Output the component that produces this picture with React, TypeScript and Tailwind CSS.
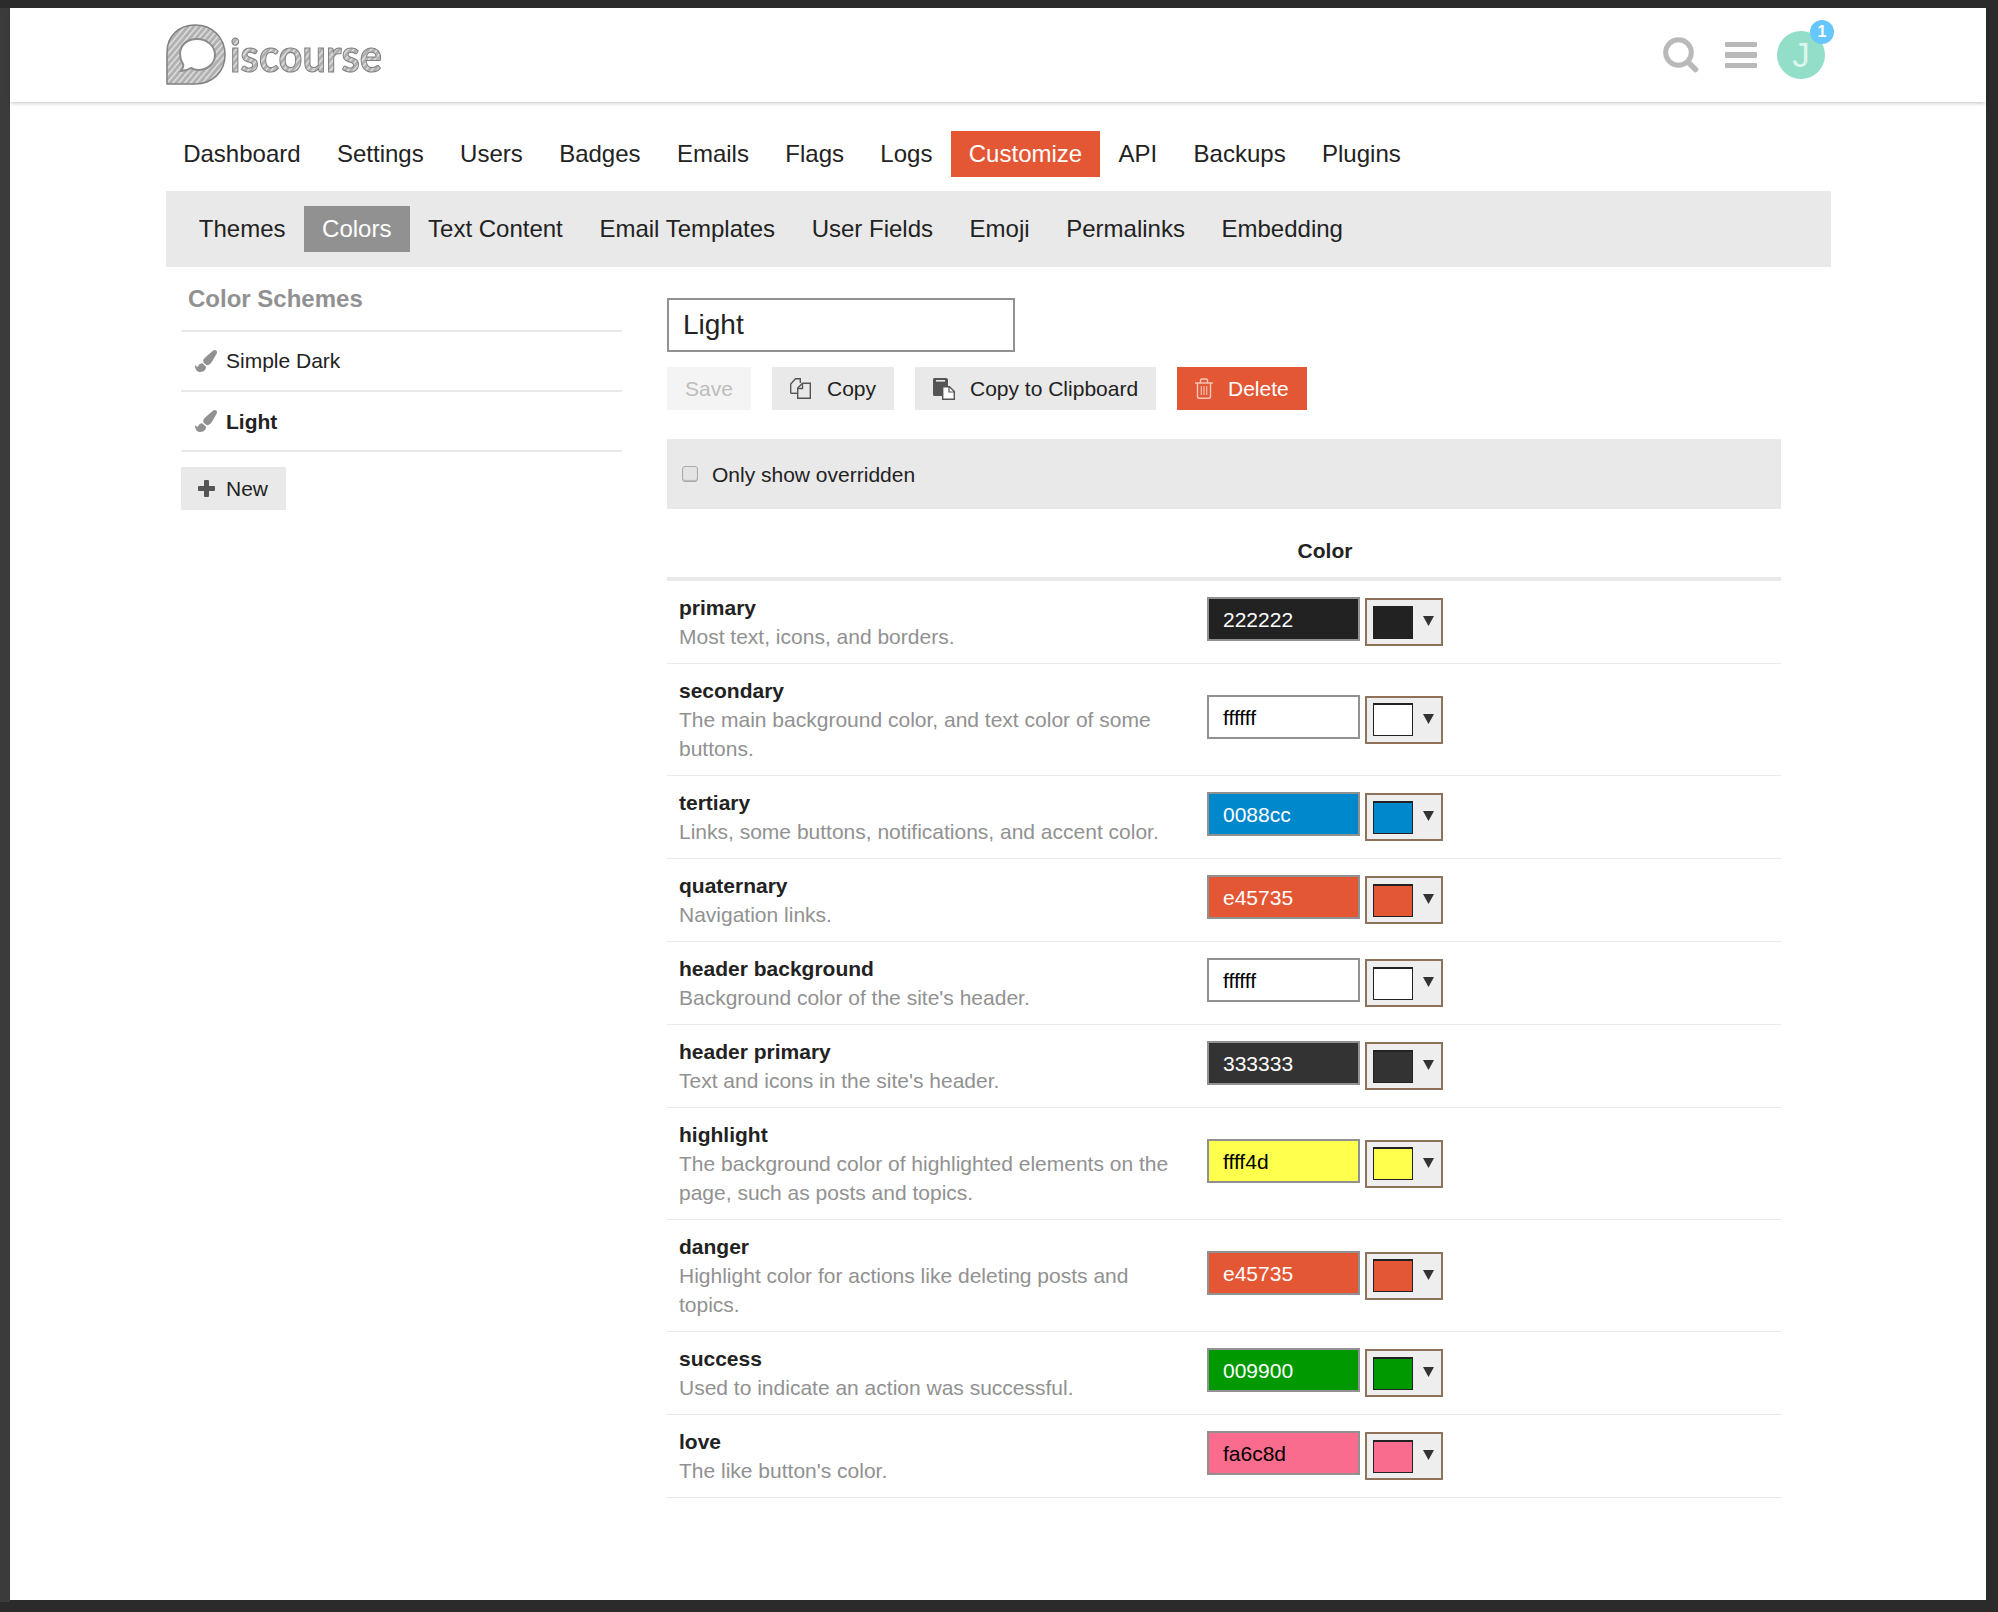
import React from "react";
import { FaPaintBrush } from "react-icons/fa";

const mainNav = ["Dashboard", "Settings", "Users", "Badges", "Emails", "Flags", "Logs", "Customize", "API", "Backups", "Plugins"];
const subNav = ["Themes", "Colors", "Text Content", "Email Templates", "User Fields", "Emoji", "Permalinks", "Embedding"];

interface IColor {
  name: string;
  description: string;
  value: string;
  fill: string;
  text: string;
}

const colors: IColor[] = [
  { name: "primary", description: "Most text, icons, and borders.", value: "222222", fill: "bg-[#222222]", text: "text-white" },
  { name: "secondary", description: "The main background color, and text color of some buttons.", value: "ffffff", fill: "bg-white", text: "text-black" },
  { name: "tertiary", description: "Links, some buttons, notifications, and accent color.", value: "0088cc", fill: "bg-[#0088cc]", text: "text-white" },
  { name: "quaternary", description: "Navigation links.", value: "e45735", fill: "bg-[#e45735]", text: "text-white" },
  { name: "header background", description: "Background color of the site's header.", value: "ffffff", fill: "bg-white", text: "text-black" },
  { name: "header primary", description: "Text and icons in the site's header.", value: "333333", fill: "bg-[#333333]", text: "text-white" },
  { name: "highlight", description: "The background color of highlighted elements on the page, such as posts and topics.", value: "ffff4d", fill: "bg-[#ffff4d]", text: "text-black" },
  { name: "danger", description: "Highlight color for actions like deleting posts and topics.", value: "e45735", fill: "bg-[#e45735]", text: "text-white" },
  { name: "success", description: "Used to indicate an action was successful.", value: "009900", fill: "bg-[#009900]", text: "text-white" },
  { name: "love", description: "The like button's color.", value: "fa6c8d", fill: "bg-[#fa6c8d]", text: "text-black" },
];

const Logo = () => (
  <svg width="280" height="70" viewBox="0 0 280 70" className="block">
    <defs>
      <pattern id="hatch" width="4.500" height="4.500" patternUnits="userSpaceOnUse" patternTransform="rotate(-50)">
        <rect width="4.500" height="4.500" fill="#b0b0b0" />
        <rect width="4.500" height="1.500" fill="#e0e0e0" />
      </pattern>
      <filter id="soft">
        <feGaussianBlur stdDeviation="0.4" />
      </filter>
    </defs>
    <g filter="url(#soft)">
      <path
        d="M1 64 L1 32 C1 16 13 5 29 5 C46 5 59 17 59 35 C59 52 46 64 29 64 Z"
        fill="url(#hatch)"
        stroke="#808080"
        strokeWidth="1.500"
      />
      <path
        d="M14 34 C14 25 21 19 31 19 C41 19 49 26 49 35 C49 44 41 50 32 50 C29 50 27 49 25 48 C22 50 19 51 15 51 C17 48 18 46 17 44 C15 41 14 38 14 34 Z"
        fill="#ffffff"
        stroke="#8c8c8c"
        strokeWidth="2"
      />
      <text
        x="64"
        y="52"
        fontFamily="Lato, sans-serif"
        fontWeight="700"
        fontSize="46"
        textLength="152"
        lengthAdjust="spacingAndGlyphs"
        fill="url(#hatch)"
        stroke="#808080"
        strokeWidth="1.100"
      >
        iscourse
      </text>
    </g>
  </svg>
);

const SearchIcon = () => (
  <svg width="36" height="36" viewBox="0 0 36 36" className="block">
    <circle cx="15.500" cy="15.500" r="12.800" fill="none" stroke="#b9b9b9" strokeWidth="5" />
    <path d="M25 25 L32.500 32.500" stroke="#b9b9b9" strokeWidth="5.500" strokeLinecap="round" />
  </svg>
);

const PlusIcon = () => (
  <svg width="17" height="17" viewBox="0 0 17 17" className="block">
    <path d="M6 1 Q6 0 7 0 H10 Q11 0 11 1 V6 H16 Q17 6 17 7 V10 Q17 11 16 11 H11 V16 Q11 17 10 17 H7 Q6 17 6 16 V11 H1 Q0 11 0 10 V7 Q0 6 1 6 H6 Z" fill="#555555" />
  </svg>
);

const CopyIcon = () => (
  <svg width="21" height="21" viewBox="0 0 21 21" className="block" fill="none" stroke="#555555" strokeWidth="1.400">
    <path d="M.7 15.300 V6 L5.500.7 H10.300 V5" />
    <path d="M.7 15.300 H7.500" />
    <path d="M7.700 20.300 V10 L12.500 5.200 H20.300 V20.300 Z" fill="#e9e9e9" />
    <path d="M7.700 10.500 H12.500 V5.500" />
  </svg>
);

const ClipboardIcon = () => (
  <svg width="22" height="22" viewBox="0 0 22 22" className="block">
    <path d="M1 0 H13 Q15 0 15 2 V8 H9 V18 H1 Q0 18 0 16 V2 Q0 0 1 0 Z" fill="#555555" />
    <rect x="3" y="2" width="9" height="1.600" fill="#e9e9e9" />
    <path d="M9.700 8.700 H16.500 L21.300 13.500 V21.300 H9.700 Z" fill="#ffffff" stroke="#555555" strokeWidth="1.400" />
    <path d="M16 9 V14 H21" fill="none" stroke="#555555" strokeWidth="1.200" />
  </svg>
);

const TrashIcon = () => (
  <svg width="18" height="21" viewBox="0 0 18 21" className="block" fill="none" stroke="#f6c9bd" strokeWidth="1.400">
    <path d="M0 5 H18" />
    <path d="M5.500 5 V2.500 Q5.500 1 7 1 H11 Q12.500 1 12.500 2.500 V5" />
    <path d="M2.500 5 V18.500 Q2.500 20.300 4.300 20.300 H13.700 Q15.500 20.300 15.500 18.500 V5" />
    <path d="M6.300 8 V17 M9 8 V17 M11.700 8 V17" strokeWidth="1.100" />
  </svg>
);

const ColorRow = ({ color }: { color: IColor }) => (
  <div className="flex items-center border-b border-[#e9e9e9]">
    <div className="w-[540px] shrink-0 pl-3 py-3 leading-[29px]">
      <div className="font-bold text-[#222222]">{color.name}</div>
      <div className="w-[500px] text-[#919191]">{color.description}</div>
    </div>
    <div className="flex items-start gap-[5px] mb-[1px]">
      <div className={`w-[153px] h-[44px] border-2 border-[#919191] pl-[14px] leading-[42px] ${color.fill} ${color.text}`}>
        {color.value}
      </div>
      <div className="w-[78px] h-[48px] mt-px border-2 border-[#8b7259] bg-[#eeeeee] flex items-center pl-[6px]">
        <div className={`w-[40px] h-[33px] border border-t-2 border-[#222222] ${color.fill}`} />
        <svg width="11" height="10" viewBox="0 0 11 10" className="ml-[10px] mb-[2px]">
          <path d="M0 0 H11 L5.500 10 Z" fill="#333333" />
        </svg>
      </div>
    </div>
  </div>
);

const App = () => {
  return (
    <div className="w-[1998px] h-[1612px] overflow-hidden bg-[#2b2b2b] pt-2 pb-[10px] flex font-['Liberation_Sans',Arial,sans-serif] text-[21px] text-[#222222]">
      <div className="w-[10px] bg-[#3b3b3b]" />
      <div className="w-[1976px] mb-[2px] bg-white">
        <header className="h-[94px] bg-white shadow-[0_2px_4px_-1px_rgba(0,0,0,0.25)] pl-[156px]">
          <div className="w-[1665px] h-full flex items-center justify-between">
            <Logo />
            <div className="flex items-center">
              <SearchIcon />
              <div className="ml-[26px] w-[32px] flex flex-col gap-[5px]">
                <div className="h-[5.500px] rounded-[1px] bg-[#b9b9b9]" />
                <div className="h-[5.500px] rounded-[1px] bg-[#b9b9b9]" />
                <div className="h-[5.500px] rounded-[1px] bg-[#b9b9b9]" />
              </div>
              <div className="relative ml-[20px] mr-[6px] w-[48px] h-[48px] rounded-full bg-[#92dec9] flex items-center justify-center text-[35px] text-white/70">
                J
                <span className="absolute top-[-11px] right-[-9px] w-[24px] h-[24px] rounded-full bg-[#66c7ff] text-white text-[16px] font-bold leading-[24px] text-center">
                  1
                </span>
              </div>
            </div>
          </div>
        </header>

        <div className="ml-[156px] w-[1665px]">
          <nav className="flex pt-[29px] -ml-px text-[24px] leading-[46px]">
            {mainNav.map((item) => (
              <a key={item} className={`px-[18.200px] ${item === "Customize" ? "bg-[#e45735] text-white" : ""}`}>
                {item}
              </a>
            ))}
          </nav>
          <nav className="flex mt-[14px] h-[76px] items-center pl-[14.500px] bg-[#e9e9e9] text-[24px] leading-[46px]">
            {subNav.map((item) => (
              <a key={item} className={`px-[18.300px] ${item === "Colors" ? "bg-[#919191] text-white" : ""}`}>
                {item}
              </a>
            ))}
          </nav>

          <div className="flex">
            <aside className="ml-[15px] w-[441px] shrink-0">
              <h3 className="pl-[7px] pt-[17px] pb-[16px] text-[24px] leading-[30px] font-bold text-[#919191]">Color Schemes</h3>
              <ul className="border-t-2 border-[#e9e9e9]">
                <li className="h-[60px] flex items-center pl-[14px] border-b-2 border-[#e9e9e9]">
                  <FaPaintBrush className="w-[22px] h-[22px] text-[#919191]" />
                  <span className="ml-[9px]">Simple Dark</span>
                </li>
                <li className="h-[60px] flex items-center pl-[14px] border-b-2 border-[#e9e9e9] font-bold">
                  <FaPaintBrush className="w-[22px] h-[22px] text-[#919191]" />
                  <span className="ml-[9px] mt-[2px]">Light</span>
                </li>
              </ul>
              <button className="mt-[15px] w-[105px] h-[43px] bg-[#e9e9e9] flex items-center pl-[17px]">
                <PlusIcon />
                <span className="ml-[11px]">New</span>
              </button>
            </aside>

            <main className="ml-[45px] w-[1114px]">
              <div className="mt-[31px] w-[348px] h-[54px] border-2 border-[#919191] pl-[14px] text-[28px] leading-[50px]">Light</div>
              <div className="mt-[15px] flex gap-[21px]">
                <button className="h-[43px] w-[84px] bg-[#f4f4f4] text-[#bdbdbd]">Save</button>
                <button className="h-[43px] w-[122px] bg-[#e9e9e9] flex items-center pl-[18px]">
                  <CopyIcon />
                  <span className="ml-[16px]">Copy</span>
                </button>
                <button className="h-[43px] w-[241px] bg-[#e9e9e9] flex items-center pl-[18px]">
                  <ClipboardIcon />
                  <span className="ml-[15px]">Copy to Clipboard</span>
                </button>
                <button className="h-[43px] w-[130px] bg-[#e45735] text-white flex items-center pl-[18px]">
                  <TrashIcon />
                  <span className="ml-[15px]">Delete</span>
                </button>
              </div>
              <div className="mt-[29px] h-[70px] bg-[#e9e9e9] flex items-center pl-[15px]">
                <div className="w-[16px] h-[16px] rounded-[3px] border border-[#aaaaaa] bg-[#e4e4e4] shadow-[inset_0_-1px_1px_rgba(0,0,0,0.2)]" />
                <span className="ml-[14px] mt-[2px]">Only show overridden</span>
              </div>
              <div className="h-[72px] border-b-4 border-[#e9e9e9] flex items-center pl-[530px] font-bold">
                <span className="w-[256px] text-center mt-[15px]">Color</span>
              </div>
              {colors.map((color) => (
                <ColorRow key={color.name + color.value} color={color} />
              ))}
            </main>
          </div>
        </div>
      </div>
    </div>
  );
};

export default App;
